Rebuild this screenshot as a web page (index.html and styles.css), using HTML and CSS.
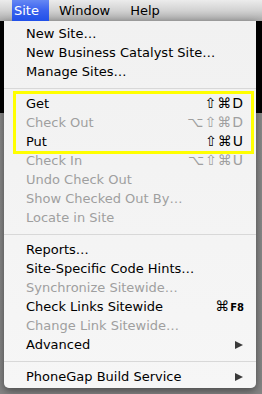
FILE: index.html
```html
<!DOCTYPE html>
<html lang="en">
<head>
    <meta charset="UTF-8">
    <title>Site menu</title>
    <link rel="stylesheet" href="styles.css">
</head>
<body>
    <!-- Menu bar -->
    <div class="menubar">
        <span class="title active">Site</span>
        <span class="title">Window</span>
        <span class="title">Help</span>
    </div>

    <!-- Site menu -->
    <div class="menu">
        <div class="item"><span>New Site…</span></div>
        <div class="item"><span>New Business Catalyst Site…</span></div>
        <div class="item"><span>Manage Sites…</span></div>
        <div class="sep"></div>

        <div class="group">
            <div class="item"><span>Get</span><span class="key">⇧⌘D</span></div>
            <div class="item off"><span>Check Out</span><span class="key">⌥⇧⌘D</span></div>
            <div class="item"><span>Put</span><span class="key">⇧⌘U</span></div>
        </div>
        <div class="item off"><span>Check In</span><span class="key">⌥⇧⌘U</span></div>
        <div class="item off"><span>Undo Check Out</span></div>
        <div class="item off"><span>Show Checked Out By…</span></div>
        <div class="item off"><span>Locate in Site</span></div>
        <div class="sep"></div>

        <div class="item"><span>Reports…</span></div>
        <div class="item"><span>Site-Specific Code Hints…</span></div>
        <div class="item off"><span>Synchronize Sitewide…</span></div>
        <div class="item"><span>Check Links Sitewide</span><span class="key">⌘<small>F8</small></span></div>
        <div class="item off"><span>Change Link Sitewide…</span></div>
        <div class="item"><span>Advanced</span><span class="arrow"></span></div>
        <div class="sep"></div>

        <div class="item"><span>PhoneGap Build Service</span><span class="arrow"></span></div>
    </div>
</body>
</html>
```

FILE: styles.css
```css
body {
    margin: 0;
    font-family: "DejaVu Sans", sans-serif;
    font-size: 13px;
    color: #000;
    background: linear-gradient(#000 0, #000 113px, #898989 113px, #858585 100%);
    height: 394px;
    overflow: hidden;
}
.menubar {
    display: flex;
    height: 21px;
    line-height: 21px;
    padding-left: 12px;
    background: linear-gradient(#ececec, #d2d2d2 50%, #a9a9a9);
}
.title {
    padding: 0 10px;
}
.title.active {
    padding: 0 10px 0 2px;
    color: #fff;
    background: linear-gradient(#6688f4, #3a62ee 50%, #2150e8);
}
.menu {
    width: 252px;
    margin-left: 4px;
    padding: 3px 0 2px;
    background: linear-gradient(#f1f1f1, #f6f6f6);
    border-radius: 0 0 5px 5px;
    box-shadow: 0 3px 8px rgba(0, 0, 0, 0.45);
}
.item {
    display: flex;
    justify-content: space-between;
    align-items: center;
    height: 19px;
    line-height: 19px;
    padding: 0 13px 0 22px;
    white-space: nowrap;
}
.item.off {
    color: #9f9f9f;
}
.key {
    font-size: 14px;
    letter-spacing: 1px;
    margin-right: -1px;
}
.key small {
    font-size: 10px;
    font-weight: bold;
    letter-spacing: 0;
}
.arrow {
    width: 0;
    height: 0;
    border-left: 8px solid #3a3a3a;
    border-top: 4px solid transparent;
    border-bottom: 4px solid transparent;
}
.sep {
    border-top: 1px solid #d8d8d8;
    margin: 7px 0 5px;
}
.group {
    margin: 0 5px 0 12px;
    box-shadow: 0 0 0 3px #ffff00;
}
.group .item {
    padding: 0 8px 0 10px;
}
```
